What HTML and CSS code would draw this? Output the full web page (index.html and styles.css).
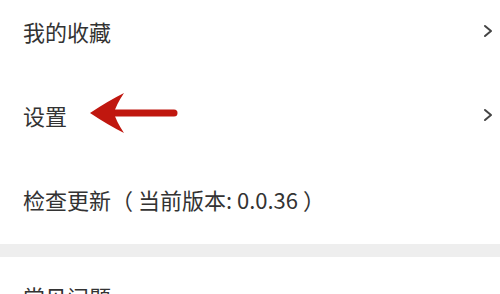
FILE: index.html
```html
<!DOCTYPE html>
<html lang="zh-CN">
  <head>
    <meta charset="utf-8" />
    <meta name="viewport" content="width=device-width, initial-scale=1" />
    <title>设置</title>
    <link rel="stylesheet" href="styles.css">
  </head>
  <body>
    <div class="list first">
        <div class="row">
            <span class="label">我的收藏</span>
            <svg class="chev" width="10" height="14" viewBox="0 0 10 14"><path d="M2 2 L8 7 L2 12" fill="none" stroke="#444" stroke-width="2" stroke-linecap="round" stroke-linejoin="round"/></svg>
        </div>
        <div class="row">
            <span class="label">设置</span>
            <svg class="chev" width="10" height="14" viewBox="0 0 10 14"><path d="M2 2 L8 7 L2 12" fill="none" stroke="#444" stroke-width="2" stroke-linecap="round" stroke-linejoin="round"/></svg>
            <!-- red pointer drawn over the row -->
            <svg class="pointer" width="95" height="44" viewBox="0 0 95 44">
                <line x1="26" y1="22" x2="88" y2="22" stroke="#c0170f" stroke-width="7" stroke-linecap="round"/>
                <path d="M4 22 Q22 10 38 2 Q30 14 28 22 Q30 30 38 42 Q22 34 4 22 Z" fill="#c0170f"/>
            </svg>
        </div>
        <div class="row">
            <span class="label">检查更新（ 当前版本: 0.0.36 ）</span>
        </div>
    </div>
    <div class="gap"></div>
    <div class="list">
        <div class="row">
            <span class="label">常见问题</span>
        </div>
    </div>
  </body>
</html>
```

FILE: styles.css
```css
body{
    margin: 0;
    background-color: #fff;
    font-family: "Noto Sans CJK SC", "Noto Sans", sans-serif;
    color: #333;
    overflow: hidden;
}

.list.first{
    margin-top: -8px;
}

.row{
    position: relative;
    height: 84px;
    box-sizing: border-box;
    display: flex;
    align-items: center;
    justify-content: space-between;
    /* glyphs sit low, nudge content up a little */
    padding: 0 7px 6px 23px;
}

.label{
    font-size: 22px;
    line-height: 1;
}

.chev{
    display: block;
}

.pointer{
    position: absolute;
    left: 86px;
    top: 15px;
}

.gap{
    height: 13px;
    background-color: #eeeeee;
}
```
